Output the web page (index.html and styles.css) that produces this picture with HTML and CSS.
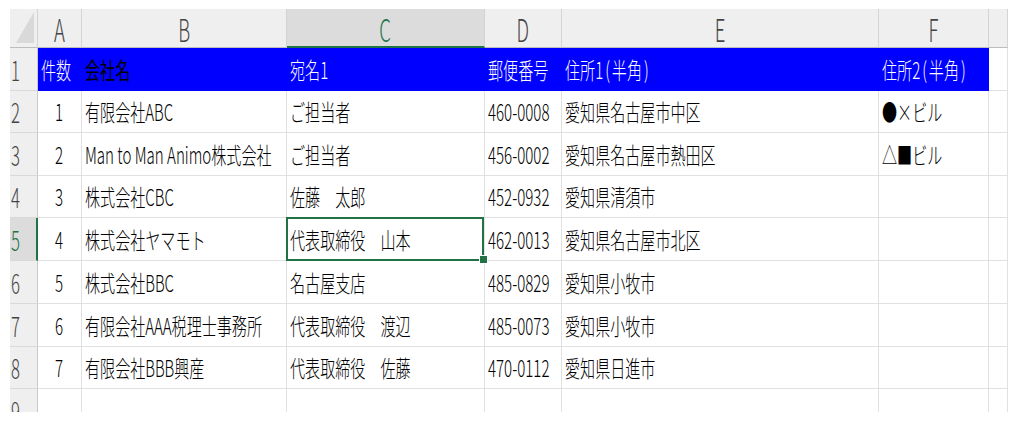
FILE: index.html
```html
<!DOCTYPE html>
<html lang="ja">
<head>
<meta charset="utf-8">
<title>Sheet</title>
<link rel="stylesheet" href="styles.css">
</head>
<body>
<div class="sheet">
  <div class="corner"><div class="tri"></div></div>
  <div class="h"><span class="t">A</span></div>
  <div class="h"><span class="t">B</span></div>
  <div class="h hs"><span class="t">C</span></div>
  <div class="h"><span class="t">D</span></div>
  <div class="h"><span class="t">E</span></div>
  <div class="h"><span class="t">F</span></div>
  <div class="h"></div>

  <div class="r"><span class="t">1</span></div>
  <div class="c b"><span class="t">件数</span></div>
  <div class="c b bk"><span class="t">会社名</span></div>
  <div class="c b"><span class="t">宛名1</span></div>
  <div class="c b"><span class="t">郵便番号</span></div>
  <div class="c b"><span class="t">住所1<span class="p">(</span>半角<span class="p">)</span></span></div>
  <div class="c b"><span class="t">住所2<span class="p">(</span>半角<span class="p">)</span></span></div>
  <div class="c"></div>

  <div class="r"><span class="t">2</span></div>
  <div class="c n"><span class="t">1</span></div>
  <div class="c"><span class="t">有限会社ABC</span></div>
  <div class="c"><span class="t">ご担当者</span></div>
  <div class="c"><span class="t">460-0008</span></div>
  <div class="c"><span class="t">愛知県名古屋市中区</span></div>
  <div class="c"><span class="t">●×ビル</span></div>
  <div class="c"></div>

  <div class="r"><span class="t">3</span></div>
  <div class="c n"><span class="t">2</span></div>
  <div class="c"><span class="t">Man to Man Animo株式会社</span></div>
  <div class="c"><span class="t">ご担当者</span></div>
  <div class="c"><span class="t">456-0002</span></div>
  <div class="c"><span class="t">愛知県名古屋市熱田区</span></div>
  <div class="c"><span class="t">△■ビル</span></div>
  <div class="c"></div>

  <div class="r"><span class="t">4</span></div>
  <div class="c n"><span class="t">3</span></div>
  <div class="c"><span class="t">株式会社CBC</span></div>
  <div class="c"><span class="t">佐藤　太郎</span></div>
  <div class="c"><span class="t">452-0932</span></div>
  <div class="c"><span class="t">愛知県清須市</span></div>
  <div class="c"></div>
  <div class="c"></div>

  <div class="r rs"><span class="t">5</span></div>
  <div class="c n"><span class="t">4</span></div>
  <div class="c"><span class="t">株式会社ヤマモト</span></div>
  <div class="c sel"><span class="t">代表取締役　山本</span></div>
  <div class="c"><span class="t">462-0013</span></div>
  <div class="c"><span class="t">愛知県名古屋市北区</span></div>
  <div class="c"></div>
  <div class="c"></div>

  <div class="r"><span class="t">6</span></div>
  <div class="c n"><span class="t">5</span></div>
  <div class="c"><span class="t">株式会社BBC</span></div>
  <div class="c"><span class="t">名古屋支店</span></div>
  <div class="c"><span class="t">485-0829</span></div>
  <div class="c"><span class="t">愛知県小牧市</span></div>
  <div class="c"></div>
  <div class="c"></div>

  <div class="r"><span class="t">7</span></div>
  <div class="c n"><span class="t">6</span></div>
  <div class="c"><span class="t">有限会社AAA税理士事務所</span></div>
  <div class="c"><span class="t">代表取締役　渡辺</span></div>
  <div class="c"><span class="t">485-0073</span></div>
  <div class="c"><span class="t">愛知県小牧市</span></div>
  <div class="c"></div>
  <div class="c"></div>

  <div class="r"><span class="t">8</span></div>
  <div class="c n"><span class="t">7</span></div>
  <div class="c"><span class="t">有限会社BBB興産</span></div>
  <div class="c"><span class="t">代表取締役　佐藤</span></div>
  <div class="c"><span class="t">470-0112</span></div>
  <div class="c"><span class="t">愛知県日進市</span></div>
  <div class="c"></div>
  <div class="c"></div>

  <div class="r last"><span class="t">9</span></div>
  <div class="c last"></div>
  <div class="c last"></div>
  <div class="c last"></div>
  <div class="c last"></div>
  <div class="c last"></div>
  <div class="c last"></div>
  <div class="c last"></div>
</div>
</body>
</html>
```
FILE: styles.css
```css
* { box-sizing: border-box; }
body {
  margin: 0;
  background: #fff;
  font-family: "Noto Sans CJK JP", "Noto Sans", sans-serif;
}
.sheet {
  display: grid;
  grid-template-columns: 28px 44px 205px 198px 77px 317px 110px 19px;
  grid-template-rows: 39px 43px 42px 43px 42px 43px 43px 43px 42px 23px;
  width: 998px;
  margin: 9px 0 0 10px;
}
.t {
  display: inline-block;
  white-space: nowrap;
  line-height: 1;
  font-weight: 300;
  transform: scaleX(0.655);
  transform-origin: 0 50%;
}
.p { padding: 0 3px; }
.corner {
  background: #efefef;
  border-right: 1px solid #d4d4d4;
  border-bottom: 1px solid #bdbdbd;
  display: flex;
  justify-content: flex-end;
  align-items: flex-end;
  padding: 0 3px 4px 0;
}
.tri {
  width: 18px;
  height: 31px;
  background: #d9d9d9;
  clip-path: polygon(100% 0, 100% 100%, 0 100%);
}
.h {
  background: #efefef;
  border-right: 1px solid #d4d4d4;
  border-bottom: 1px solid #bdbdbd;
  display: flex;
  align-items: center;
  justify-content: center;
  color: #444;
  font-size: 32px;
}
.h .t { transform: scaleX(0.58); transform-origin: 50% 50%; }
.hs {
  background: #dcdcdc;
  color: #217346;
  border-bottom: 2px solid #217346;
}
.r {
  background: #efefef;
  border-right: 1px solid #c8c8c8;
  border-bottom: 1px solid #d9d9d9;
  display: flex;
  align-items: center;
  padding-left: 1px;
  color: #444;
  font-size: 27px;
}
.r .t { transform: scaleX(0.62); }
.rs {
  background: #dcdcdc;
  color: #217346;
  border-right: 2px solid #217346;
}
.c {
  border-right: 1px solid #e1e1e1;
  border-bottom: 1px solid #e1e1e1;
  display: flex;
  align-items: center;
  padding-left: 3px;
  font-size: 23px;
  color: #000;
  min-width: 0;
  position: relative;
}
.n { justify-content: center; padding-left: 0; }
.n .t { transform-origin: 50% 50%; }
.b {
  background: #0000ff;
  border-right-color: #0000ff;
  border-bottom-color: #0000ff;
  color: #fff;
}
.bk { color: #000; }
.bk .t { font-weight: 400; }
.last {
  overflow: hidden;
  align-items: flex-start;
  border-bottom: none;
}
.r.last .t { line-height: 43px; }
.sel::after {
  content: "";
  position: absolute;
  left: -1px;
  top: -1px;
  right: 0;
  bottom: -1px;
  border: 2px solid #217346;
}
.sel::before {
  content: "";
  position: absolute;
  right: -4px;
  bottom: -4px;
  width: 7px;
  height: 7px;
  background: #217346;
  border: 1px solid #fff;
  z-index: 2;
}
```
